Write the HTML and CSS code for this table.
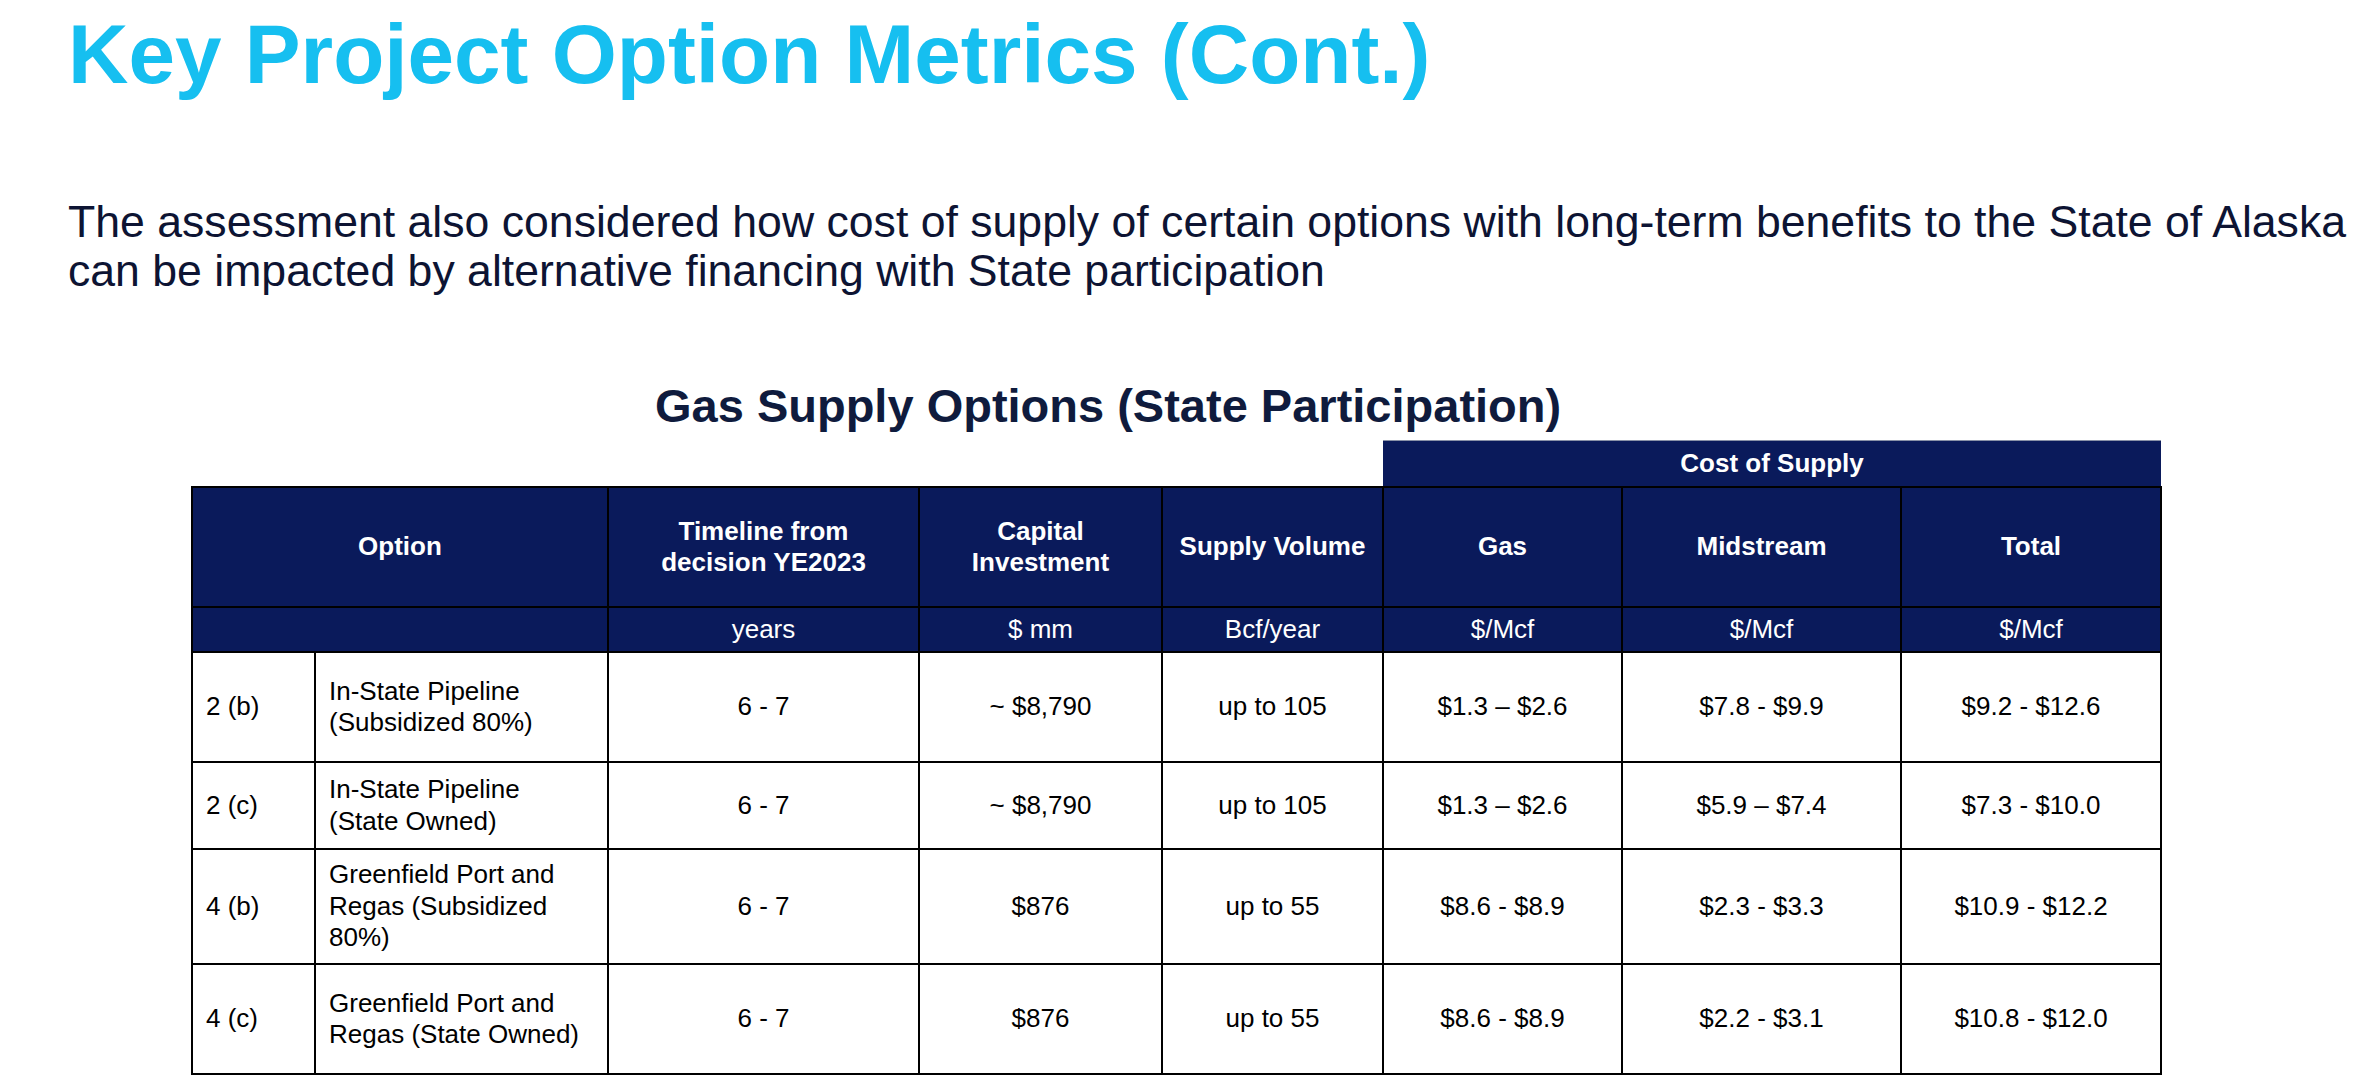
FILE: index.html
```html
<!DOCTYPE html>
<html lang="en">
<head>
<meta charset="utf-8">
<title>Key Project Option Metrics (Cont.)</title>
<link rel="stylesheet" href="styles.css">
</head>
<body>
<div class="slide">
  <h1 class="title">Key Project Option Metrics (Cont.)</h1>
  <p class="intro">The assessment also considered how cost of supply of certain options with long-term benefits to the State of Alaska<br>can be impacted by alternative financing with State participation</p>
  <h2 class="subtitle">Gas Supply Options (State Participation)</h2>
  <table class="options">
    <colgroup>
      <col class="c-num">
      <col class="c-name">
      <col class="c-time">
      <col class="c-capex">
      <col class="c-vol">
      <col class="c-gas">
      <col class="c-mid">
      <col class="c-total">
    </colgroup>
    <thead>
      <tr class="r-group">
        <td class="blank"></td>
        <td class="blank"></td>
        <td class="blank"></td>
        <td class="blank"></td>
        <td class="blank"></td>
        <th class="group" colspan="3">Cost of Supply</th>
      </tr>
      <tr class="r-head">
        <th colspan="2">Option</th>
        <th>Timeline from<br>decision YE2023</th>
        <th>Capital<br>Investment</th>
        <th>Supply Volume</th>
        <th>Gas</th>
        <th>Midstream</th>
        <th>Total</th>
      </tr>
      <tr class="r-units">
        <td colspan="2"></td>
        <td>years</td>
        <td>$ mm</td>
        <td>Bcf/year</td>
        <td>$/Mcf</td>
        <td>$/Mcf</td>
        <td>$/Mcf</td>
      </tr>
    </thead>
    <tbody>
      <tr class="r1">
        <td class="num">2 (b)</td>
        <td class="name">In-State Pipeline<br>(Subsidized 80%)</td>
        <td>6 - 7</td>
        <td>~ $8,790</td>
        <td>up to 105</td>
        <td>$1.3 – $2.6</td>
        <td>$7.8 - $9.9</td>
        <td>$9.2 - $12.6</td>
      </tr>
      <tr class="r2">
        <td class="num">2 (c)</td>
        <td class="name">In-State Pipeline<br>(State Owned)</td>
        <td>6 - 7</td>
        <td>~ $8,790</td>
        <td>up to 105</td>
        <td>$1.3 – $2.6</td>
        <td>$5.9 – $7.4</td>
        <td>$7.3 - $10.0</td>
      </tr>
      <tr class="r3">
        <td class="num">4 (b)</td>
        <td class="name">Greenfield Port and<br>Regas (Subsidized<br>80%)</td>
        <td>6 - 7</td>
        <td>$876</td>
        <td>up to 55</td>
        <td>$8.6 - $8.9</td>
        <td>$2.3 - $3.3</td>
        <td>$10.9 - $12.2</td>
      </tr>
      <tr class="r4">
        <td class="num">4 (c)</td>
        <td class="name">Greenfield Port and<br>Regas (State Owned)</td>
        <td>6 - 7</td>
        <td>$876</td>
        <td>up to 55</td>
        <td>$8.6 - $8.9</td>
        <td>$2.2 - $3.1</td>
        <td>$10.8 - $12.0</td>
      </tr>
    </tbody>
  </table>
</div>
</body>
</html>
```

FILE: styles.css
```css
html, body {
  margin: 0;
  padding: 0;
  background: #ffffff;
}

body {
  font-family: "Liberation Sans", Arial, sans-serif;
  width: 2356px;
  height: 1087px;
  overflow: hidden;
}

.slide {
  padding: 0 0 0 68px;
}

.title {
  margin: 12px 0 0 0;
  font-size: 83.7px;
  line-height: 84px;
  font-weight: 700;
  color: #16bff0;
  white-space: nowrap;
}

.intro {
  margin: 101px 0 0 0;
  font-size: 44.6px;
  line-height: 49px;
  color: #0d1433;
  white-space: nowrap;
}

.subtitle {
  margin: 87px 0 0 587px;
  font-size: 47px;
  line-height: 47px;
  font-weight: 700;
  color: #0f1b3d;
  white-space: nowrap;
}

.options {
  margin: 11px 0 0 123px;
  border-collapse: collapse;
  table-layout: fixed;
  width: 1969px;
  font-size: 26px;
  line-height: 31.5px;
}

.c-num { width: 123px; }
.c-name { width: 293px; }
.c-time { width: 311px; }
.c-capex { width: 243px; }
.c-vol { width: 221px; }
.c-gas { width: 239px; }
.c-mid { width: 279px; }
.c-total { width: 260px; }

.options th,
.options td {
  border: 2px solid #000;
  padding: 0;
  text-align: center;
  vertical-align: middle;
  white-space: nowrap;
}

.options thead th,
.options thead td {
  background: #0a1a5b;
  color: #ffffff;
}

.options thead th {
  font-weight: 700;
}

.options thead td {
  font-weight: 400;
}

.options thead td.blank {
  background: #ffffff;
  border: none;
}

.options thead th.group {
  border-top: 1px solid #8a92a8;
  border-left: none;
  border-right: none;
  height: 45px;
}

.r-head th {
  height: 118px;
}

.r-units td {
  height: 43px;
}

.options tbody td {
  color: #000;
}

.options tbody td.num,
.options tbody td.name {
  text-align: left;
  padding-left: 13px;
}

.r1 td { height: 108px; }
.r2 td { height: 85px; }
.r3 td { height: 113px; }
.r4 td { height: 108px; }
```
